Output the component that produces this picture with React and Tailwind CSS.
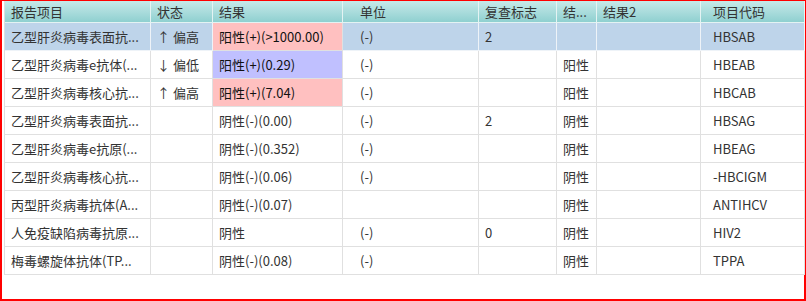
import React from "react";

const cols = "grid-cols-[146px_62px_130px_5px_6px_125px_78px_40px_104px_6px_98px]";

const headers = ["报告项目", "状态", "结果", "", "", "单位", "复查标志", "结...", "结果2", "", "项目代码"];

const rows = [
  { name: "乙型肝炎病毒表面抗...", status: "↑ 偏高", result: "阳性(+)(>1000.00)", hl: "pink", unit: "(-)", recheck: "2", flag: "", code: "HBSAB", selected: true },
  { name: "乙型肝炎病毒e抗体(...", status: "↓ 偏低", result: "阳性(+)(0.29)", hl: "blue", unit: "(-)", recheck: "", flag: "阳性", code: "HBEAB" },
  { name: "乙型肝炎病毒核心抗...", status: "↑ 偏高", result: "阳性(+)(7.04)", hl: "pink", unit: "(-)", recheck: "", flag: "阳性", code: "HBCAB" },
  { name: "乙型肝炎病毒表面抗...", status: "", result: "阴性(-)(0.00)", unit: "(-)", recheck: "2", flag: "阴性", code: "HBSAG" },
  { name: "乙型肝炎病毒e抗原(...", status: "", result: "阴性(-)(0.352)", unit: "(-)", recheck: "", flag: "阴性", code: "HBEAG" },
  { name: "乙型肝炎病毒核心抗...", status: "", result: "阴性(-)(0.06)", unit: "(-)", recheck: "", flag: "阴性", code: "-HBCIGM" },
  { name: "丙型肝炎病毒抗体(A...", status: "", result: "阴性(-)(0.07)", unit: "", recheck: "", flag: "阴性", code: "ANTIHCV" },
  { name: "人免疫缺陷病毒抗原...", status: "", result: "阴性", unit: "(-)", recheck: "0", flag: "阴性", code: "HIV2" },
  { name: "梅毒螺旋体抗体(TP...", status: "", result: "阴性(-)(0.08)", unit: "(-)", recheck: "", flag: "阴性", code: "TPPA" },
];

const Cell = ({ children, className = "" }) => (
  <div className={`h-[28px] flex items-center px-[6px] whitespace-nowrap overflow-hidden border-r border-b ${className}`}>
    {children}
  </div>
);

export default function App() {
  return (
    <div
      className="w-[806px] h-[301px] bg-white border-t border-l-2 border-r-2 border-b-2 border-[#ff0000] pl-[2px] text-[13px] text-[#333]"
      style={{ fontFamily: '"Noto Sans CJK SC", "Noto Sans", sans-serif' }}
    >
      <div className={`grid ${cols} border-l border-[#dedede]`}>
        {headers.map((h, i) => (
          <div
            key={i}
            className="h-[22px] flex items-center px-[6px] whitespace-nowrap overflow-hidden bg-linear-to-b from-[#c6e9e9] to-[#8fd0d0] border-r border-b border-[#e4f3f3] text-[#333]"
          >
            {h}
          </div>
        ))}

        {rows.map((r, i) => {
          const rowBg = r.selected ? "bg-[#bed4ea] border-[#eef3f8]" : "bg-white border-[#e0e0e0]";
          const resBg =
            r.hl === "pink"
              ? "bg-[#ffc0c0] border-[#e0e0e0]"
              : r.hl === "blue"
              ? "bg-[#c0c0ff] border-[#e0e0e0]"
              : rowBg;
          return (
            <React.Fragment key={i}>
              <Cell className={rowBg}>{r.name}</Cell>
              <Cell className={rowBg}>{r.status}</Cell>
              <Cell className={`${resBg} ${r.hl ? "text-[#111]" : ""}`}>{r.result}</Cell>
              <Cell className={rowBg}></Cell>
              <Cell className={rowBg}></Cell>
              <Cell className={rowBg}>{r.unit}</Cell>
              <Cell className={rowBg}>{r.recheck}</Cell>
              <Cell className={rowBg}>{r.flag}</Cell>
              <Cell className={rowBg}></Cell>
              <Cell className={rowBg}></Cell>
              <Cell className={rowBg}>{r.code}</Cell>
            </React.Fragment>
          );
        })}
      </div>
    </div>
  );
}
